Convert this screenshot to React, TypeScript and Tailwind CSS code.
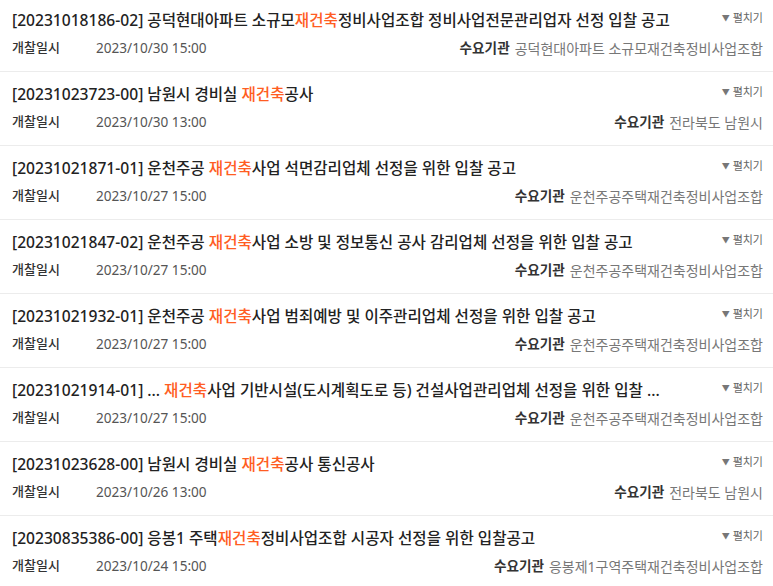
import React from 'react';

type Bid = {
  id: string;
  pre: string;
  hit: string;
  post: string;
  date: string;
  agency: string;
};

const bids: Bid[] = [
  { id: '20231018186-02', pre: '공덕현대아파트 소규모', hit: '재건축', post: '정비사업조합 정비사업전문관리업자 선정 입찰 공고', date: '2023/10/30 15:00', agency: '공덕현대아파트 소규모재건축정비사업조합' },
  { id: '20231023723-00', pre: '남원시 경비실 ', hit: '재건축', post: '공사', date: '2023/10/30 13:00', agency: '전라북도 남원시' },
  { id: '20231021871-01', pre: '운천주공 ', hit: '재건축', post: '사업 석면감리업체 선정을 위한 입찰 공고', date: '2023/10/27 15:00', agency: '운천주공주택재건축정비사업조합' },
  { id: '20231021847-02', pre: '운천주공 ', hit: '재건축', post: '사업 소방 및 정보통신 공사 감리업체 선정을 위한 입찰 공고', date: '2023/10/27 15:00', agency: '운천주공주택재건축정비사업조합' },
  { id: '20231021932-01', pre: '운천주공 ', hit: '재건축', post: '사업 범죄예방 및 이주관리업체 선정을 위한 입찰 공고', date: '2023/10/27 15:00', agency: '운천주공주택재건축정비사업조합' },
  { id: '20231021914-01', pre: '... ', hit: '재건축', post: '사업 기반시설(도시계획도로 등) 건설사업관리업체 선정을 위한 입찰 ...', date: '2023/10/27 15:00', agency: '운천주공주택재건축정비사업조합' },
  { id: '20231023628-00', pre: '남원시 경비실 ', hit: '재건축', post: '공사 통신공사', date: '2023/10/26 13:00', agency: '전라북도 남원시' },
  { id: '20230835386-00', pre: '응봉1 주택', hit: '재건축', post: '정비사업조합 시공자 선정을 위한 입찰공고', date: '2023/10/24 15:00', agency: '응봉제1구역주택재건축정비사업조합' },
];

function BidRow({ bid }: { bid: Bid }) {
  return (
    <div className="flex flex-col pl-3 pr-[10px] pt-[11px] first:pt-[9px] pb-[13px] border-b border-[#ececec] last:border-b-0">
      <div className="flex items-start justify-between h-[22px]">
        <div className="text-[15.6px] leading-[22px] text-[#222] font-medium whitespace-nowrap">
          [{bid.id}] {bid.pre}
          <span className="text-[#ff5d22]">{bid.hit}</span>
          {bid.post}
        </div>
        <button className="flex items-center gap-[3px] text-[11px] leading-[16px] text-[#666] mt-[1px]">
          <span className="text-[8px] text-[#777]">▼</span>
          <span>펼치기</span>
        </button>
      </div>
      <div className="flex items-center justify-between mt-[7px] h-[20px]">
        <div className="flex items-center">
          <span className="w-[84px] text-[13px] font-medium text-[#333]">개찰일시</span>
          <span className="text-[13.6px] text-[#555]">{bid.date}</span>
        </div>
        <div className="flex items-center gap-[5px]">
          <span className="text-[13.6px] font-bold text-[#333]">수요기관</span>
          <span className="text-[14px] text-[#777]">{bid.agency}</span>
        </div>
      </div>
    </div>
  );
}

export default function App() {
  return (
    <div className="w-[773px] h-[586px] bg-white overflow-hidden" style={{ fontFamily: '"Noto Sans", "Noto Sans CJK KR", sans-serif' }}>
      {bids.map((b) => (
        <BidRow key={b.id} bid={b} />
      ))}
    </div>
  );
}
